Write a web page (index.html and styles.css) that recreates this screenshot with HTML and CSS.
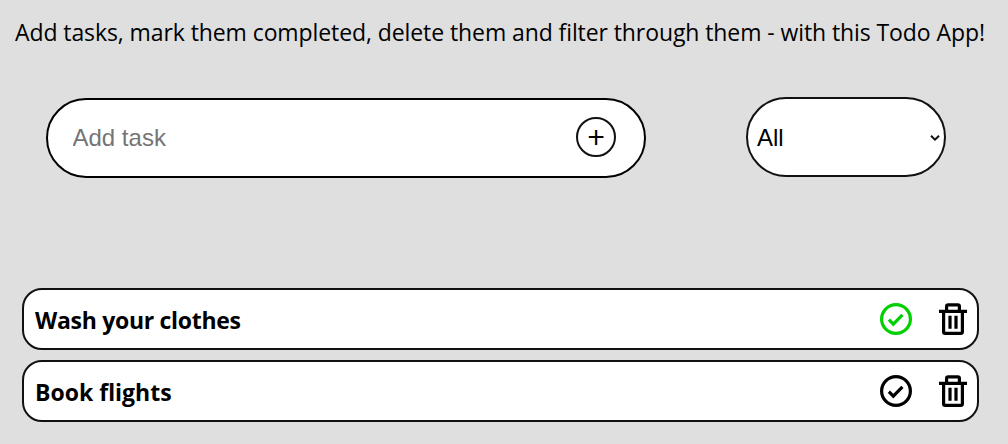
FILE: index.html
```html
<!DOCTYPE html>
<html lang="en">
<head>
<meta charset="utf-8">
<title>Todo App</title>
<link rel="stylesheet" href="styles.css">
</head>
<body>
<p class="intro">Add tasks, mark them completed, delete them and filter through them - with this Todo App!</p>
<form class="controls">
  <div class="task-entry">
    <input class="task-input" type="text" placeholder="Add task">
    <button class="add-button" type="button"><span class="plus">+</span></button>
  </div>
  <div class="filter">
    <span>All</span>
    <svg class="chevron" width="10" height="8" viewBox="0 0 10 8"><path d="M1 1.7 5 5.6 9 1.7"/></svg>
  </div>
</form>
<ul class="tasks">
  <li class="task">
    <span class="task-name wash">Wash your clothes</span>
    <svg class="check done" width="32" height="32" viewBox="0 0 32 32"><circle cx="16" cy="16" r="14.4"/><path d="m8.9 16.6 4.4 4.5 9.1-9.2"/></svg>
    <svg class="trash" width="28" height="32" viewBox="0 0 28 32"><path d="M0 8.4h28M7.6 8V3.4q0-1.6 1.6-1.6h9.6q1.6 0 1.6 1.6V8M4.6 8.4v20.3q0 1.7 1.7 1.7h15.4q1.7 0 1.7-1.7V8.4M11 12.7v13M17 12.7v13"/></svg>
  </li>
  <li class="task">
    <span class="task-name book">Book flights</span>
    <svg class="check" width="32" height="32" viewBox="0 0 32 32"><circle cx="16" cy="16" r="14.4"/><path d="m8.9 16.6 4.4 4.5 9.1-9.2"/></svg>
    <svg class="trash" width="28" height="32" viewBox="0 0 28 32"><path d="M0 8.4h28M7.6 8V3.4q0-1.6 1.6-1.6h9.6q1.6 0 1.6 1.6V8M4.6 8.4v20.3q0 1.7 1.7 1.7h15.4q1.7 0 1.7-1.7V8.4M11 12.7v13M17 12.7v13"/></svg>
  </li>
</ul>
</body>
</html>
```
FILE: styles.css
```css
* { box-sizing: border-box; }
body {
  margin: 0;
  height: 444px;
  overflow: hidden;
  background: #dfdfdf;
  color: #000;
  font-family: "Open Sans", "Noto Sans", sans-serif;
}
.intro {
  margin: 0;
  padding: 15px 0 0 15px;
  height: 97px;
  font-size: 23px;
  line-height: 34px;
  letter-spacing: -0.09px;
  white-space: nowrap;
}
.controls {
  display: flex;
  gap: 100px;
  height: 81px;
  padding-left: 46px;
}
.task-entry {
  display: flex;
  width: 600px;
  height: 80px;
  margin-top: 1px;
  padding: 0 28px 0 24.5px;
  border: 2px solid #000;
  border-radius: 40px;
  background: #fff;
}
.task-input {
  flex: 1;
  min-width: 0;
  padding: 0;
  border: 0;
  outline: 0;
  background: transparent;
  font: 24px "Liberation Sans", Arial, sans-serif;
}
.task-input::placeholder { color: #757575; }
.add-button {
  display: flex;
  align-items: center;
  justify-content: center;
  width: 40px;
  height: 40px;
  margin-top: 17px;
  padding: 0;
  border: 2px solid #111;
  border-radius: 50%;
  background: #fff;
  color: #000;
}
.plus {
  padding-bottom: 1px;
  font: 500 31px/34px "Open Sans", sans-serif;
}
.filter {
  display: flex;
  align-items: center;
  justify-content: space-between;
  width: 200px;
  height: 80px;
  padding: 2px 4px 0 9px;
  border: 2px solid #111;
  border-radius: 40px;
  background: #fff;
  font: 24px "Liberation Sans", Arial, sans-serif;
}
.chevron {
  margin-bottom: 1px;
  fill: none;
  stroke: #111;
  stroke-width: 2;
}
.tasks {
  display: grid;
  gap: 10px;
  margin: 110px 29px 0 22px;
  padding: 0;
  list-style: none;
}
.task {
  display: flex;
  height: 62px;
  padding: 0 10px 0 11px;
  border: 2px solid #111;
  border-radius: 20px;
  background: #fff;
}
.task-name {
  flex: 1;
  font-size: 23px;
  font-weight: 700;
  line-height: 60px;
}
.wash { letter-spacing: -0.3px; }
.check, .trash {
  fill: none;
  stroke: #000;
  stroke-width: 3.2;
}
.check { margin: 13px 27px 0 0; }
.check.done { stroke: #00d000; }
.trash { margin-top: 13px; }
```
